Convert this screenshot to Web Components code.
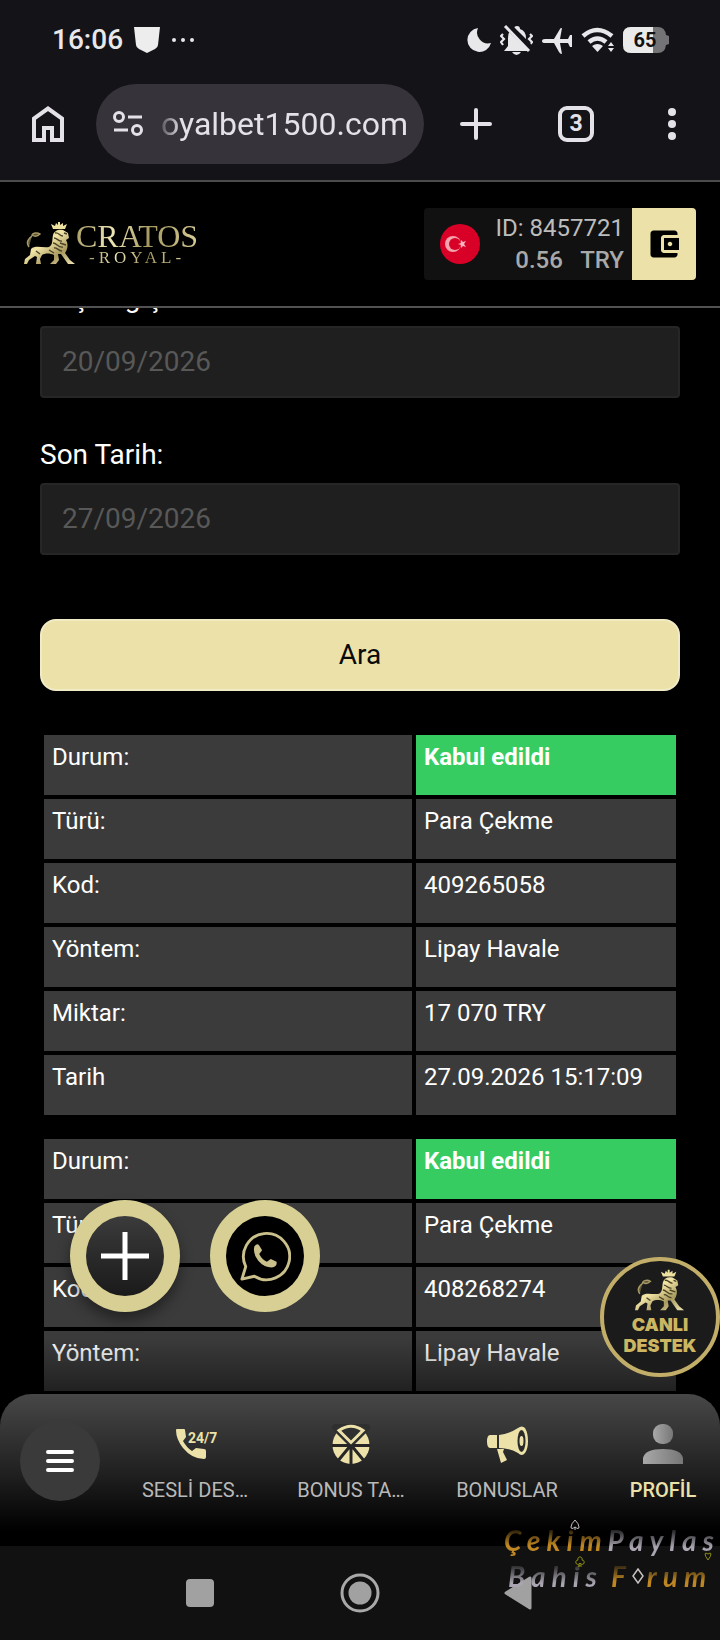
<!DOCTYPE html>
<html lang="tr">
<head>
<meta charset="utf-8">
<meta name="viewport" content="width=device-width, initial-scale=1">
<title>Cratos Royal</title>
<style>
html, body { margin: 0; background: #000; }
body { font-family: Roboto, "Noto Sans", sans-serif; color: #fff; }
</style>
</head>
<body>
<cashier-app></cashier-app>
<script>
const define = (name, html, setup) => {
  const tpl = document.createElement('template');
  tpl.innerHTML = '<style>*{box-sizing:border-box}svg{display:block}button,a{font:inherit;color:inherit;text-decoration:none}button{border:0;padding:0;background:none}</style>' + html;
  customElements.define(name, class extends HTMLElement {
    constructor() {
      super();
      this.attachShadow({ mode: 'open' }).appendChild(tpl.content.cloneNode(true));
    }
    connectedCallback() { if (setup) setup(this, this.shadowRoot); }
  });
};

define('lion-mark', `
<style>:host{display:block}svg{width:100%;height:100%}</style>
<svg viewBox="0 0 52 42" aria-hidden="true">
  <defs><linearGradient id="g" x1="0" y1="0" x2="1" y2="1"><stop offset="0" stop-color="#b5a468"/><stop offset=".4" stop-color="#f2e5a6"/><stop offset=".7" stop-color="#a8995f"/><stop offset="1" stop-color="#f0e6b4"/></linearGradient></defs>
  <path d="M16 12c-3-2-7-1-8 1 3 2 6 1 8-1zM8 14c-4 3-6 7-3 11" fill="#5c5435" stroke="#a79a66" stroke-width="1.5"/>
  <path fill="url(#g)" d="M7 27C11 23 18 26 25 25C29 23 28 18 29 13C30 9 34 7 39 8L44 11L45 16L42 18C45 23 43 28 41 31L46 38L51 42L44 42L37 32L34 32L35 38L32 42L26 42L30 38L30 33C26 31 21 31 18 33L16 37L17 42L12 42L13 35L11 34L5 38L3 42L0 42L1 37L6 33Z"/>
  <path fill="#efe1a0" d="M29 7L27 2L31 4L32 1L34 3L34 0L36 0L36 3L39 1L39 4L43 2L41 7Z"/>
  <path d="M31 11c4-1 4 3 8 3M30 16c3 0 5 4 8 3M29 21c4 0 5 5 10 4M30 26c3-1 4 3 8 3M40 11l3 1M36 21l6 2M12 29l4 3M25 28l5 3" fill="none" stroke="#4b4326" stroke-width="1.4"/>
</svg>`);

define('status-bar', `
<style>
:host{display:flex;align-items:center;height:80px;padding:0 50px 0 52px;color:#e8e8ea}
time{font-size:28px;font-weight:500;line-height:32px}
.shield{margin-left:11px}.dots{margin-left:11px}.spring{flex:1}
.icons{display:flex;gap:8px;align-items:center}
.battery{position:relative;display:grid;place-items:center;width:47px;height:26px;font-size:20px;font-weight:700;line-height:24px;color:#111}
.battery svg{position:absolute;inset:0}.battery span{position:relative;margin-right:3px}
</style>
<time>16:06</time>
<svg class="shield" width="26" height="26" viewBox="0 0 26 26"><path d="M0 0h26l-2 18q0 2-3 4l-8 4-8-4q-3-2-3-4z" fill="#ededed"/></svg>
<svg class="dots" width="24" height="6" viewBox="0 0 24 6" fill="#e8e8ea"><circle cx="3" cy="3" r="2"/><circle cx="12" cy="3" r="2"/><circle cx="21" cy="3" r="2"/></svg>
<span class="spring"></span>
<span class="icons">
<svg width="26" height="26" viewBox="0 0 26 26"><path d="M12 1A12 12 0 1 0 25 16A11 11 0 0 1 12 1Z" fill="#e8e8ea"/></svg>
<svg width="33" height="30" viewBox="0 0 33 30"><path d="M4 26l4-5V13Q8 5 14 4Q14 1 17 1T20 4Q26 6 26 13v8l4 5z" fill="#e8e8ea"/><path d="M12 27h9q-2 3-4.500 3T12 27z" fill="#e8e8ea"/><path d="M3 9l-2 2 3 3-3 3 2 3M30 9l2 2-3 3 3 3-2 3" fill="none" stroke="#e8e8ea" stroke-width="2.200"/><path d="M6-1l26 26" stroke="#141318" stroke-width="7"/><path d="M5 1l24 25" stroke="#e8e8ea" stroke-width="3"/></svg>
<svg width="32" height="27" viewBox="0 0 32 27"><path d="M4 12h9L19 2q0-1 2-1l-2 11h8l2-4h2v12h-2l-2-4h-8l2 11q-2 0-3-2l-5-9H4q-3 0-3-2t3-2z" fill="#e8e8ea"/></svg>
<svg width="34" height="26" viewBox="0 0 34 26"><path d="M2 9Q16-3 31 9M8 15q8.500-7 17 0" fill="none" stroke="#e8e8ea" stroke-width="4.500"/><path d="M11 19q5.500-4 11 0l-5.500 6z" fill="#e8e8ea"/><path d="M27 19l3-4 3 4zM27 21l3 4 3-4z" fill="#e8e8ea"/></svg>
<span class="battery"><svg width="47" height="26" viewBox="0 0 47 26"><path d="M8 0h27q7 0 8 8l3 1v8l-3 1q-1 8-8 8H8Q0 26 0 18V8Q0 0 8 0z" fill="#747477"/><path d="M8 0h22v26H8Q0 26 0 18V8Q0 0 8 0z" fill="#eaeaeb"/></svg><span>65</span></span>
</span>`);

define('browser-toolbar', `
<style>
:host{display:flex;align-items:center;box-sizing:border-box;height:102px;padding:4px 0 16px;border-bottom:2px solid #4b4b4e;color:#e4e1e9}
button{display:grid;place-items:center;height:80px;width:96px}
.new{width:104px}
.pill{flex:1;min-width:0;display:flex;align-items:center;gap:18px;height:80px;padding:0 17px;border-radius:40px;background:#36333a}
.tune{width:30px;flex:none;height:80px}
.url{font-size:32px;line-height:40px;white-space:nowrap;-webkit-mask-image:linear-gradient(90deg,#0003,#000 20px);mask-image:linear-gradient(90deg,#0003,#000 20px)}
.tabs{width:36px;height:36px;border:4px solid #e4e1e9;border-radius:9px;font-size:23px;font-weight:700;line-height:28px;text-align:center}
</style>
<button aria-label="Ana sayfa"><svg width="32" height="36" viewBox="0 0 32 36"><path d="M2 34V12.500L16 2.500l14 10V34H20V22h-8v12z" fill="none" stroke="#e4e1e9" stroke-width="4"/></svg></button>
<div class="pill"><button class="tune" aria-label="Site bilgileri"><svg width="30" height="26" viewBox="0 0 30 26" fill="none" stroke="#e4e1e9" stroke-width="3"><circle cx="6" cy="6" r="4.500"/><circle cx="24" cy="19" r="4.500"/><path d="M15 6h14M1 19h14"/></svg></button><span class="url">oyalbet1500.com</span></div>
<button class="new" aria-label="Yeni sekme"><svg width="32" height="32" viewBox="0 0 32 32"><path d="M2 16h28M16 2v28" stroke="#e4e1e9" stroke-width="4" stroke-linecap="round"/></svg></button>
<button aria-label="Sekmeler"><span class="tabs">3</span></button>
<button aria-label="Menü"><svg width="8" height="32" viewBox="0 0 8 32" fill="#e4e1e9"><circle cx="4" cy="4" r="4"/><circle cx="4" cy="16" r="4"/><circle cx="4" cy="28" r="4"/></svg></button>`);

define('site-header', `
<style>
:host{display:flex;align-items:center;justify-content:space-between;box-sizing:border-box;height:126px;padding:0 24px;border-bottom:2px solid #515151;background:#000}
.logo{display:flex;align-items:flex-start;font-family:"Liberation Serif",serif}
lion-mark{width:52px;height:42px}
.words{display:flex;flex-direction:column;align-items:center}
.words span{background:linear-gradient(100deg,#a99c64,#efe6b6 30%,#a4985f 60%,#d9cf98);-webkit-background-clip:text;background-clip:text;color:transparent}
.name{font-size:32px;line-height:28px}.sub{font-size:17px;line-height:16px;letter-spacing:4px}
.account{display:flex;height:72px;border-radius:4px;overflow:hidden;background:#111}
.flag{margin:16px 0 0 16px;width:40px;height:40px}
.info{display:flex;flex-direction:column;align-items:flex-end;width:152px;padding:4px 8px 0 0;font-size:24px;line-height:32px;color:#bdbdbd;white-space:pre}
.info b{font-weight:500;color:#a9a9a9}
.wallet{display:grid;place-items:center;width:64px;height:72px;background:#ece2a9}
</style>
<a class="logo" href="#" aria-label="Cratos Royal"><lion-mark></lion-mark><span class="words"><span class="name">CRATOS</span><span class="sub">-ROYAL-</span></span></a>
<div class="account">
<svg class="flag" viewBox="0 0 40 40"><circle cx="20" cy="20" r="20" fill="#d80027"/><circle cx="13" cy="20" r="8" fill="#f3a4ae"/><circle cx="15" cy="20" r="6" fill="#d80027"/><path d="M18 20l3-1 0-3 2 2 3-1-2 3 2 3-3-1-2 2 0-3z" fill="#f6b4bd"/></svg>
<div class="info"><span>ID: 8457721</span><b>0.56   TRY</b></div>
<button class="wallet" aria-label="Cüzdan"><svg width="36" height="36" viewBox="0 0 24 24"><path d="M21 18v1c0 1.100-.9 2-2 2H5c-1.110 0-2-.9-2-2V5c0-1.100.89-2 2-2h14c1.100 0 2 .9 2 2v1h-9c-1.110 0-2 .9-2 2v8c0 1.100.89 2 2 2h9zm-9-2h10V8H12v8zm4-2.500c-.83 0-1.500-.67-1.500-1.500s.67-1.500 1.500-1.500 1.500.67 1.500 1.500-.67 1.500-1.500 1.500z"/></svg></button>
</div>`);

define('date-field', `
<style>
:host{display:flex;flex-direction:column;gap:12px;font-size:28px;line-height:33px}
input{width:100%;height:72px;padding:0 20px 2px;border:2px solid #262626;border-radius:4px;background:#1f1f1f;color:#585858;font:inherit;outline:0}
</style>
<label for="date"></label><input id="date" type="text">`,
(host, root) => {
  root.querySelector('label').textContent = host.getAttribute('label');
  root.querySelector('input').value = host.getAttribute('value');
});

define('record-table', `
<style>
:host{display:block}
table{width:100%;table-layout:fixed;border-spacing:4px;font-size:24px;line-height:28px}
th,td{height:60px;padding:8px;text-align:left;vertical-align:top;font-weight:400;background:#3b3b3b}
.ok{background:#36cc62;font-weight:700}
col.value{width:260px}
</style>
<table><colgroup><col><col class="value"></colgroup><tbody></tbody></table>`,
(host, root) => {
  const body = root.querySelector('tbody');
  if (body.rows.length) return;
  host.getAttribute('rows').split('|').forEach((entry, i) => {
    const [key, value] = entry.split('=');
    const row = body.insertRow();
    const head = document.createElement('th');
    head.scope = 'row';
    head.textContent = key;
    row.append(head);
    const cell = row.insertCell();
    cell.textContent = value;
    if (i === 0) cell.className = 'ok';
  });
});

define('round-action', `
<style>
:host{display:block}
button{display:grid;place-items:center;width:110px;height:112px;border-radius:50%;border:16px solid #d7cf93;background:linear-gradient(#3b3b3b,#1a1a1a);box-shadow:0 8px 14px #0006}
:host([dark]) button{background:#000;box-shadow:none}
</style><button><slot></slot></button>`,
(host, root) => root.querySelector('button').setAttribute('aria-label', host.getAttribute('label')));

define('live-support', `
<style>
:host{display:block}
a{display:flex;flex-direction:column;align-items:center;width:120px;height:120px;padding-top:8px;border:4px solid #c2ae68;border-radius:50%;background:#1b1b1b;color:#cdb661;font:900 18px/21px Inter,sans-serif;text-align:center}
lion-mark{width:50px;height:42px;margin-bottom:3px}
</style><a href="#"><lion-mark></lion-mark><span>CANLI</span><span>DESTEK</span></a>`);

define('nav-item', `
<style>
:host{display:block;flex:0 0 156px}
a{display:flex;flex-direction:column;align-items:center;gap:14px;font-size:20px;line-height:24px;color:#b9b9b9;white-space:nowrap}
:host([active]) a{color:#ece2a9;font-weight:500}
.icon{height:40px;display:grid;place-items:center}
</style><a href="#"><span class="icon"><slot name="icon"></slot></span><slot></slot></a>`);

define('bottom-nav', `
<style>
:host{display:flex;box-sizing:border-box;height:152px;padding-left:20px;border-radius:32px 32px 0 0;overflow:hidden;background:linear-gradient(#474747,#222 50%,#000 90%)}
.menu{flex:none;display:grid;place-items:center;width:80px;height:80px;margin:27px 17px 0 0;border-radius:50%;background:#3a3a3a}
nav{display:flex;flex:1;min-width:0;overflow:hidden;padding-top:30px}
</style>
<button class="menu" aria-label="Menü"><svg width="28" height="22" viewBox="0 0 28 22"><path d="M2 2h24M2 11h24M2 20h24" stroke="#fff" stroke-width="4" stroke-linecap="round"/></svg></button>
<nav>
<nav-item><svg slot="icon" width="44" height="40" viewBox="0 0 44 40" fill="#ece2a9"><path d="M3 6q0-1 1-1h7q1 0 1 1l1 7-3 4q4 7 9 10l4-3 8 1q2 0 2 2v6q0 2-2 2Q19 35 10 24 3 15 3 6z"/><text x="15" y="19" font-family="Roboto, sans-serif" font-size="14" font-weight="700">24/7</text></svg>SESLİ DES…</nav-item>
<nav-item><svg slot="icon" width="38" height="40" viewBox="0 0 38 40"><ellipse cx="19" cy="21" rx="18.500" ry="19" fill="#ece2a9"/><path d="M-2 3Q19-12 40 3L19 24z" fill="#2f2f2f"/><path d="M0 21.500h38M19 21v20M19 21L5 38M19 21l14 17" stroke="#262626" stroke-width="3"/><path d="M7 6.500Q19-2 31 6.500L19 18.500z" fill="#2f2f2f" stroke="#ece2a9" stroke-width="3"/></svg>BONUS TA…</nav-item>
<nav-item><svg slot="icon" width="41" height="40" viewBox="0 0 41 40" fill="#ece2a9"><path d="M3 11h7v13H3q-3 0-3-6.500T3 11zM12 11Q22 10 31 4q4-3 7 0 3 5 3 13t-3 12q-3 4-7 0-9-5-19-5zM10 25h7l-1 3 4 8-6 3z"/><ellipse cx="34.500" cy="17" rx="4" ry="11" fill="#292929"/><ellipse cx="34.500" cy="17" rx="2" ry="5"/></svg>BONUSLAR</nav-item>
<nav-item active><svg slot="icon" width="40" height="40" viewBox="0 0 40 40"><defs><linearGradient id="p"><stop stop-color="#a8a8a8"/><stop offset="1" stop-color="#777"/></linearGradient></defs><g fill="url(#p)"><rect x="10" width="20" height="20" rx="9"/><path d="M0 40v-6Q2 25 20 25t20 9v6z"/></g></svg>PROFİL</nav-item>
</nav>`);

define('system-nav', `
<style>
:host{display:flex;justify-content:center;height:94px;background:#111}
button{flex:0 0 160px;height:94px;display:grid;place-items:center}
</style>
<button aria-label="Son uygulamalar"><svg width="28" height="28"><rect width="28" height="28" rx="4" fill="#a1a1a1"/></svg></button>
<button aria-label="Ana ekran"><svg width="40" height="40" viewBox="0 0 40 40"><circle cx="20" cy="20" r="18" fill="none" stroke="#a9a9a9" stroke-width="3"/><circle cx="20" cy="20" r="11.500" fill="#a1a1a1"/></svg></button>
<button aria-label="Geri"><svg width="32" height="34" viewBox="0 0 32 34"><path d="M2 17L26 2v30z" fill="#a1a1a1" stroke="#a1a1a1" stroke-width="3" stroke-linejoin="round"/></svg></button>`);

define('forum-mark', `
<style>
:host{display:block;width:216px;font:italic 700 28px/36px Lato,sans-serif;letter-spacing:6px;white-space:nowrap;pointer-events:none}
div{position:relative;display:flex}
.two{padding-left:4px}
span{background:linear-gradient(#c88c1700 10%,#bf8723 65%);-webkit-background-clip:text;background-clip:text;color:transparent}
.s{background-image:linear-gradient(#aaa5b000 10%,#aaa5b0 70%)}
.f{margin-left:8px}
svg{position:absolute;fill:none;stroke:#c8c0c0}
.spade{left:66px;top:-3px}.heart{right:8px;top:29px}.club{left:70px;top:-3px;stroke:#8c8c10}
.heart{stroke:#8c8c10}.diamond{position:static;align-self:center;margin-right:3px}
</style>
<div><span>Çekim</span><span class="s">Paylas</span>
<svg class="spade" width="10" height="12" viewBox="0 0 10 12"><path d="M5 1Q1 5 1 8t4 0q4 3 4 0T5 1zM5 8v3"/></svg>
<svg class="heart" width="8" height="10" viewBox="0 0 8 10"><path d="M4 9Q1 5 1 3t3 0q3-2 3 0T4 9z"/></svg></div>
<div class="two"><span class="s">Bahis</span><span class="f">F</span><svg class="diamond" width="12" height="16" viewBox="0 0 12 16"><path d="M6 1l5 7-5 7-5-7z" stroke-width="1.500"/></svg><span>rum</span>
<svg class="club" width="12" height="12" viewBox="0 0 12 12"><path d="M4 5a2.200 2.200 0 1 1 4 0a2.200 2.200 0 1 1-2 3a2.200 2.200 0 1 1-2-3M6 8v3H4h4"/></svg></div>`);

define('cashier-app', `
<style>
:host{position:relative;display:flex;flex-direction:column;height:100vh;overflow:hidden;background:#000}
.phone{flex:none;background:#141318}
site-header,bottom-nav,system-nav{flex:none}
main{position:relative;flex:1;min-height:0;overflow:hidden}
.page{display:flex;flex-direction:column;padding:0 40px;margin-top:-27px}
date-field + date-field{margin-top:40px}
.search{height:72px;margin:64px 0 40px;border:2px solid #f1ebc5;border-radius:16px;background:#ece2a9;color:#0a0a0a;font-size:28px;line-height:32px}
record-table + record-table{margin-top:16px}
.fade{position:absolute;inset:auto 0 0;height:56px;background:linear-gradient(#0000,#0007);pointer-events:none}
.actions{position:absolute;left:70px;bottom:82px;display:flex;gap:30px}
live-support{position:absolute;right:0;bottom:17px}
forum-mark{position:absolute;right:0;bottom:46px}
</style>
<header class="phone"><status-bar></status-bar><browser-toolbar></browser-toolbar></header>
<site-header></site-header>
<main>
<div class="page">
<date-field label="Başlangıç Tarihi:" value="20/09/2026"></date-field>
<date-field label="Son Tarih:" value="27/09/2026"></date-field>
<button class="search">Ara</button>
<record-table rows="Durum:=Kabul edildi|Türü:=Para Çekme|Kod:=409265058|Yöntem:=Lipay Havale|Miktar:=17 070 TRY|Tarih=27.09.2026 15:17:09"></record-table>
<record-table rows="Durum:=Kabul edildi|Türü:=Para Çekme|Kod:=408268274|Yöntem:=Lipay Havale"></record-table>
</div>
<div class="fade"></div>
<div class="actions">
<round-action label="Ekle"><svg width="50" height="50" viewBox="0 0 50 50"><path d="M1 25h48M25 1v48" stroke="#fff" stroke-width="5"/></svg></round-action>
<round-action label="WhatsApp" dark><svg width="52" height="52" viewBox="0 0 54 54" fill="none" stroke="#c9c08b" stroke-width="3"><path d="M3 51l4-13A24 24 0 1 1 16 48z" stroke-linejoin="round"/><path d="M16 17q3-4 5-1l3 5-3 4q3 6 8 8l4-3 6 3q1 5-5 6-8 0-14-7-6-8-4-15z" fill="#c9c08b" stroke="none"/></svg></round-action>
</div>
<live-support></live-support>
</main>
<bottom-nav></bottom-nav>
<system-nav></system-nav>
<forum-mark></forum-mark>`);
</script>
</body>
</html>
